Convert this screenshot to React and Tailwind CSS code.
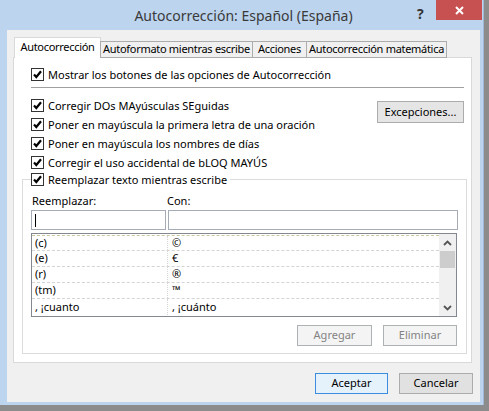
import React from 'react';

const ROWS = [
  ['(c)', '©'],
  ['(e)', '€'],
  ['(r)', '®'],
  ['(tm)', '™'],
  [', ¡cuanto', ', ¡cuánto'],
];

function Check() {
  return (
    <svg width="13" height="13" viewBox="0 0 13 13" className="shrink-0">
      <rect x="0.5" y="0.5" width="12" height="12" fill="#fff" stroke="#333" />
      <path d="M3 6.5 L5.3 9 L10 3.2" stroke="#000" strokeWidth="2.2" fill="none" />
    </svg>
  );
}

function CheckRow({ label, className = '' }) {
  return (
    <div className={`flex items-center gap-[4px] h-[19px] whitespace-nowrap ${className}`}>
      <Check />
      <span className="leading-[16px]">{label}</span>
    </div>
  );
}

function Chevron({ down }) {
  return (
    <svg width="9" height="6" viewBox="0 0 9 6">
      <path
        d={down ? 'M1 1 L4.5 4.5 L8 1' : 'M1 5 L4.5 1.5 L8 5'}
        stroke="#555"
        strokeWidth="1.8"
        fill="none"
      />
    </svg>
  );
}

export default function App() {
  return (
    <div className="w-[489px] h-[411px] bg-[#8c8c8c] font-['Noto_Sans',sans-serif] text-[11px] text-black">
      <div className="w-[484px] h-[405px] bg-[#bcd4ee] flex flex-col border-r border-[#9fb8d6]">
        {/* title bar */}
        <div className="h-[30px] relative flex items-center justify-center">
          <span className="text-[14px] text-[#3a3a3a] pl-[4px]">Autocorrección: Español (España)</span>
          <span className="absolute left-[417px] top-[3px] text-[14px] font-bold text-[#333]">?</span>
          <div className="absolute left-[436px] top-0 w-[46px] h-[20px] bg-[#c75050] flex items-center justify-center">
            <svg width="9" height="9" viewBox="0 0 9 9">
              <path d="M1 1 L8 8 M8 1 L1 8" stroke="#fff" strokeWidth="2" />
            </svg>
          </div>
        </div>

        {/* client area */}
        <div className="ml-[7px] w-[473px] h-[372px] bg-[#f0f0f0] flex flex-col pt-[7px] pl-[6px]">
          {/* tabs */}
          <div className="flex items-end h-[21px] relative z-10 whitespace-nowrap tracking-[-0.3px]">
            <div className="ml-[1px] w-[87px] h-[21px] bg-white border border-b-0 border-[#d9d9d9] flex items-center justify-center pb-[1px]">
              Autocorrección
            </div>
            <div className="-ml-[1px] w-[153px] h-[17px] bg-[#f0f0f0] border border-[#acacac] flex items-center justify-center">
              Autoformato mientras escribe
            </div>
            <div className="-ml-[1px] w-[55px] h-[17px] bg-[#f0f0f0] border border-[#acacac] flex items-center justify-center">
              Acciones
            </div>
            <div className="-ml-[1px] w-[141px] h-[17px] bg-[#f0f0f0] border border-[#acacac] flex items-center justify-center">
              Autocorrección matemática
            </div>
          </div>

          {/* panel */}
          <div className="-mt-[1px] w-[459px] h-[306px] bg-white border border-[#d9d9d9] flex flex-col pt-[7px]">
            <CheckRow label="Mostrar los botones de las opciones de Autocorrección" className="ml-[17px]" />
            <div className="ml-[17px] mt-[3px] w-[433px] h-px bg-[#a0a0a0]" />
            <div className="flex mt-[8px]">
              <div className="ml-[17px] flex flex-col">
                <CheckRow label="Corregir DOs MAyúsculas SEguidas" />
                <CheckRow label="Poner en mayúscula la primera letra de una oración" />
                <CheckRow label="Poner en mayúscula los nombres de días" />
                <CheckRow label="Corregir el uso accidental de bLOQ MAYÚS" />
              </div>
              <button className="ml-auto mr-[7px] mt-[5px] w-[87px] h-[22px] bg-[#e5e5e5] border border-[#acacac] text-black">
                Excepciones...
              </button>
            </div>

            <fieldset className="ml-[8px] w-[444px] border border-[#dcdcdc] px-[8px] pb-[7px] -mt-[2px]">
              <legend className="pr-[3px]">
                <CheckRow label="Reemplazar texto mientras escribe" />
              </legend>
              <div className="flex mt-[3px] h-[18px] items-center">
                <span className="w-[136px] pl-[1px]">Reemplazar:</span>
                <span>Con:</span>
              </div>
              <div className="flex gap-[2px]">
                <div className="w-[135px] h-[20px] bg-white border border-[#a5acb5] flex items-center pl-[3px]">
                  <div className="w-px h-[13px] bg-black" />
                </div>
                <div className="w-[290px] h-[20px] bg-white border border-[#a5acb5]" />
              </div>
              <div className="mt-[3px] w-[426px] h-[84px] border border-[#828790] bg-white flex">
                <div className="flex-1 flex flex-col pt-[1px]">
                  {ROWS.map(([a, b], i) => (
                    <div
                      key={a}
                      className={`flex h-[16px] items-center border-b border-dashed border-[#d4d4d4] ${
                        i === 0 ? 'border-t border-t-dotted border-t-[#c8c8a0]' : ''
                      } ${i === ROWS.length - 1 ? 'border-b-0' : ''}`}
                    >
                      <span className="w-[136px] pl-[3px] border-r border-dotted border-[#d4d4d4] h-full flex items-center">{a}</span>
                      <span className="pl-[4px]">{b}</span>
                    </div>
                  ))}
                </div>
                <div className="w-[17px] bg-[#f0f0f0] flex flex-col items-center">
                  <div className="h-[17px] flex items-center justify-center">
                    <Chevron />
                  </div>
                  <div className="w-[15px] h-[17px] bg-[#cdcdcd]" />
                  <div className="flex-1" />
                  <div className="h-[17px] flex items-center justify-center">
                    <Chevron down />
                  </div>
                </div>
              </div>
              <div className="flex justify-end gap-[11px] mt-[8px] pr-[1px]">
                <button className="w-[75px] h-[21px] bg-[#f4f4f4] border border-[#adb2b5] text-[#838383]">Agregar</button>
                <button className="w-[74px] h-[21px] bg-[#f4f4f4] border border-[#adb2b5] text-[#838383]">Eliminar</button>
              </div>
            </fieldset>
          </div>

          {/* dialog buttons */}
          <div className="flex justify-end gap-[11px] mt-[10px] pr-[7px]">
            <button className="w-[73px] h-[21px] bg-[#e5f1fb] border border-[#3c8de0] text-black">Aceptar</button>
            <button className="w-[74px] h-[21px] bg-[#e1e1e1] border border-[#acacac] text-black">Cancelar</button>
          </div>
        </div>
      </div>
    </div>
  );
}
